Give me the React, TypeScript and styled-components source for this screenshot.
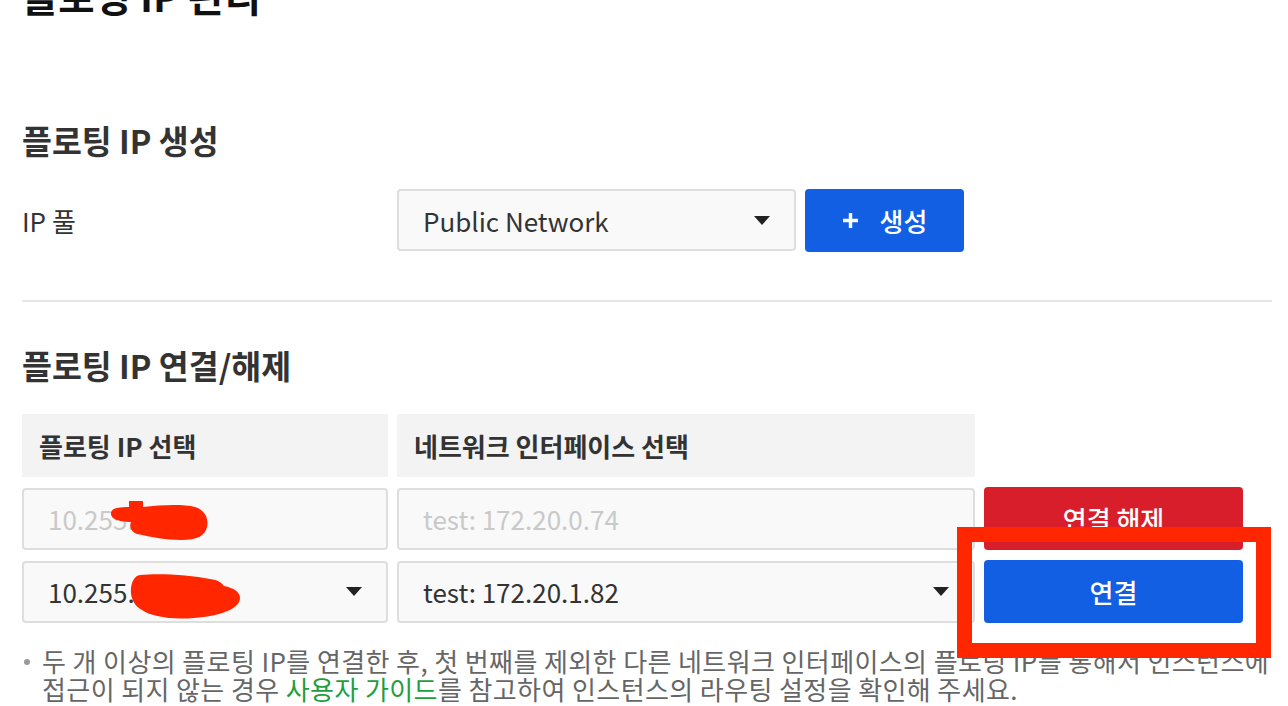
import React from 'react'
import styled, {createGlobalStyle} from 'styled-components'

const GlobalStyle = createGlobalStyle`
  html, body {
    margin: 0;
    padding: 0;
    background: #fff;
    overflow: hidden;
  }
  body {
    font-family: "Noto Sans CJK KR", "Noto Sans", sans-serif;
    color: #333;
  }
`

const Page = styled.div`
  position: relative;
  width: 1288px;
  height: 706px;
  overflow: hidden;
  padding: 0 16px 0 22px;
  box-sizing: border-box;
`

const PageTitle = styled.h1`
  margin: -28px 0 0;
  font-size: 39.5px;
  line-height: 46px;
  font-weight: 700;
  color: #111;
`

const SectionTitle = styled.h2<{$top: number}>`
  margin: ${({$top}) => $top}px 0 0;
  font-size: 32.5px;
  line-height: 40px;
  font-weight: 700;
  color: #333;
`

const FormRow = styled.div`
  display: flex;
  align-items: center;
  margin-top: 29px;
  height: 62px;
`

const Label = styled.div`
  width: 375px;
  font-size: 26px;
  color: #333;
`

const SelectBox = styled.div<{$width?: number}>`
  position: relative;
  display: flex;
  align-items: center;
  justify-content: space-between;
  box-sizing: border-box;
  width: ${({$width}) => ($width ? `${$width}px` : '100%')};
  height: 62px;
  padding: 0 24px 0 24px;
  background: #f9f9f9;
  border: 2px solid #dedede;
  border-radius: 4px;
  font-size: 26px;
  color: ${({color}) => color || '#333'};
`

const Caret = styled.span`
  width: 0;
  height: 0;
  border-left: 8px solid transparent;
  border-right: 8px solid transparent;
  border-top: 9px solid #222;
`

const Button = styled.button<{$tone: 'blue' | 'red'; $width?: number}>`
  display: flex;
  align-items: center;
  justify-content: center;
  gap: 21px;
  width: ${({$width}) => ($width ? `${$width}px` : '100%')};
  height: 63px;
  border: none;
  border-radius: 4px;
  background: ${({$tone}) => ($tone === 'blue' ? '#125fe4' : '#d81e2a')};
  color: #fff;
  font-family: inherit;
  font-size: 26px;
  font-weight: 500;
  padding: 0;
  cursor: pointer;
`

const Divider = styled.hr`
  margin: 49px 0 0;
  border: none;
  height: 2px;
  background: #e6e6e6;
`

const Table = styled.div`
  display: grid;
  grid-template-columns: 366px 578px 259px;
  column-gap: 9px;
  row-gap: 10px;
  margin-top: 29px;
  align-items: center;
`

const HeadCell = styled.div`
  display: flex;
  align-items: center;
  height: 63px;
  padding-left: 17px;
  background: #f3f3f3;
  font-size: 26px;
  font-weight: 700;
  color: #333;
`

const Note = styled.p`
  position: relative;
  margin: 24px -16px 0 0;
  padding-left: 20px;
  font-size: 26px;
  line-height: 28px;
  color: #666;
  letter-spacing: 0.4px;
  word-break: keep-all;

  &::before {
    content: '';
    position: absolute;
    left: 2px;
    top: 12px;
    width: 6px;
    height: 6px;
    border-radius: 50%;
    background: #999;
  }
`

const GuideLink = styled.a`
  color: #1f9e3e;
  text-decoration: none;
`

const Scribble = styled.svg<{$left: number; $top: number}>`
  position: absolute;
  left: ${({$left}) => $left}px;
  top: ${({$top}) => $top}px;
`

const Highlight = styled.div`
  position: absolute;
  left: 957px;
  top: 527px;
  width: 314px;
  height: 131px;
  box-sizing: border-box;
  border: 15px solid #ff2600;
`

const PlusIcon = () => (
  <svg width="17" height="17" viewBox="0 0 17 17">
    <path d="M8.5 1v15M1 8.5h15" stroke="#fff" strokeWidth="3.4" />
  </svg>
)

const App = () => {
  return (
    <>
      <GlobalStyle />
      <Page>
        <PageTitle>플로팅 IP 관리</PageTitle>

        <SectionTitle $top={102}>플로팅 IP 생성</SectionTitle>
        <FormRow>
          <Label>IP 풀</Label>
          <SelectBox $width={399}>
            Public Network
            <Caret />
          </SelectBox>
          <div style={{width: 9}} />
          <Button $tone="blue" $width={159}>
            <PlusIcon />
            생성
          </Button>
        </FormRow>

        <Divider />

        <SectionTitle $top={43}>플로팅 IP 연결/해제</SectionTitle>
        <Table>
          <HeadCell>플로팅 IP 선택</HeadCell>
          <HeadCell>네트워크 인터페이스 선택</HeadCell>
          <div />

          <SelectBox color="#c9c9c9">
            10.255.
            <Scribble $left={81} $top={9} width="104" height="42" viewBox="0 0 104 42">
              <path
                d="M24 2h14v6c18-2 40-3 52 0 10 3 14 12 12 20-2 9-10 13-26 13-14 0-30-3-44-6-6-2-8-8-6-12-6 0-14-1-18-4-4-4-2-9 4-10 4-1 8-1 12-1z"
                fill="#ff2600"
              />
            </Scribble>
          </SelectBox>
          <SelectBox color="#c9c9c9">test: 172.20.0.74</SelectBox>
          <Button $tone="red">연결 해제</Button>

          <SelectBox>
            10.255.
            <Scribble $left={106} $top={10} width="112" height="47" viewBox="0 0 112 47">
              <path
                d="M10 2c20-2 50 0 70 4 8 1 12 4 14 7 10 2 16 6 16 12 0 10-18 18-46 20-24 2-44-2-52-8C4 33 0 24 1 15 2 7 5 3 10 2z"
                fill="#ff2600"
              />
            </Scribble>
            <Caret />
          </SelectBox>
          <SelectBox>
            test: 172.20.1.82
            <Caret />
          </SelectBox>
          <Button $tone="blue">연결</Button>
        </Table>

        <Note>
          두 개 이상의 플로팅 IP를 연결한 후, 첫 번째를 제외한 다른 네트워크 인터페이스의 플로팅 IP를 통해서 인스턴스에
          접근이 되지 않는 경우 <GuideLink href="#">사용자 가이드</GuideLink>를 참고하여 인스턴스의 라우팅 설정을 확인해 주세요.
        </Note>

        <Highlight />
      </Page>
    </>
  )
}

export default App
